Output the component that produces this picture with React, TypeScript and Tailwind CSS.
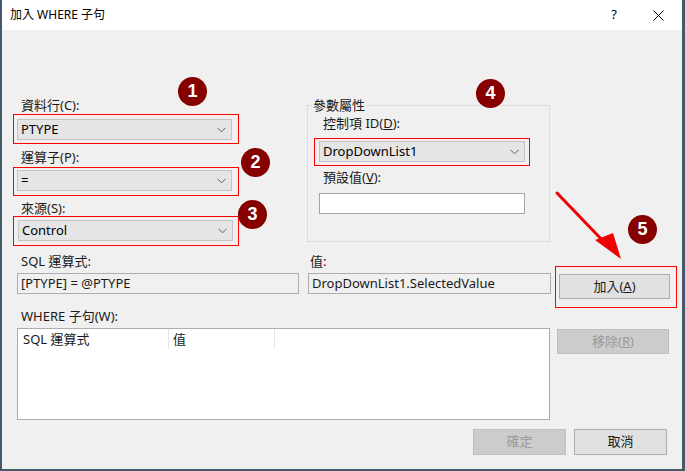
import React from "react";

const font = "font-['Segoe_UI','Noto_Sans','Noto_Sans_CJK_TC',sans-serif]";

function Chevron() {
  return (
    <svg width="9" height="6" viewBox="0 0 9 6" className="shrink-0">
      <polyline points="0.5,0.8 4.5,4.8 8.5,0.8" fill="none" stroke="#606060" strokeWidth="1" />
    </svg>
  );
}

function Combo({ value, width }: { value: string; width: string }) {
  return (
    <div
      className={`${width} h-[21px] bg-[#e5e5e5] border border-[#c4c4c4] flex items-center justify-between pl-[3px] pr-[5px] text-[13px] text-black`}
    >
      <span>{value}</span>
      <Chevron />
    </div>
  );
}

function Badge({ n, className }: { n: number; className: string }) {
  return (
    <div
      className={`absolute w-[29px] h-[29px] rounded-full bg-[#870000] text-white flex items-center justify-center text-[18px] font-bold font-['Liberation_Sans',sans-serif] ${className}`}
    >
      {n}
    </div>
  );
}

function Label({ children, className = "" }: { children: React.ReactNode; className?: string }) {
  return <div className={`h-[16px] leading-[16px] text-[13px] text-[#1a1a1a] ${className}`}>{children}</div>;
}

function Btn({
  children,
  disabled,
  className = "",
}: {
  children: React.ReactNode;
  disabled?: boolean;
  className?: string;
}) {
  return (
    <div
      className={`flex items-center justify-center text-[13px] border ${
        disabled ? "bg-[#cccccc] border-[#bfbfbf] text-[#9a9a9a]" : "bg-[#e1e1e1] border-[#adadad] text-[#1a1a1a]"
      } ${className}`}
    >
      {children}
    </div>
  );
}

export default function App() {
  return (
    <div
      className={`relative w-[685px] h-[471px] bg-[#f0f0f0] border-l-2 border-r-[3px] border-b-2 border-[#45596b] flex flex-col ${font}`}
    >
      {/* Title bar */}
      <div className="h-[30px] bg-white flex items-center pl-[8px] shrink-0">
        <span className="text-[12px] text-black">加入 WHERE 子句</span>
        <span className="ml-auto text-[13px] text-black mr-[36px]">?</span>
        <svg width="11" height="11" viewBox="0 0 11 11" className="mr-[18px]">
          <path d="M0.5 0.5 L10.5 10.5 M10.5 0.5 L0.5 10.5" stroke="#000" strokeWidth="1" />
        </svg>
      </div>

      {/* Top row */}
      <div className="flex mt-[67px]">
        <div className="ml-[11px] w-[226px] flex flex-col">
          <Label className="pl-[8px]">資料行(C):</Label>
          <div className="mt-[1px] h-[30px] border border-[#ff0000] pl-[3px] pt-[4px]">
            <Combo value="PTYPE" width="w-[215px]" />
          </div>
          <Label className="pl-[8px] mt-[5px]">運算子(P):</Label>
          <div className="mt-[2px] h-[29px] border border-[#ff0000] pl-[3px] pt-[2px]">
            <Combo value="=" width="w-[215px]" />
          </div>
          <Label className="pl-[8px] mt-[4px]">來源(S):</Label>
          <div className="h-[30px] border border-[#ff0000] pl-[4px] pt-[3px]">
            <Combo value="Control" width="w-[215px]" />
          </div>
        </div>

        <div className="relative ml-[68px] mt-[8px] w-[243px] h-[137px] border border-[#dcdcdc] flex flex-col">
          <span className="absolute -top-[9px] left-[4px] px-[1px] bg-[#f0f0f0] text-[13px] leading-[16px] text-[#1a1a1a]">
            參數屬性
          </span>
          <Label className="pl-[15px] mt-[9px]">
            控制項 ID(<span className="underline">D</span>):
          </Label>
          <div className="ml-[6px] mt-[7px] w-[216px] h-[28px] border border-[#ff0000] pl-[4px] pt-[2px]">
            <Combo value="DropDownList1" width="w-[206px]" />
          </div>
          <Label className="pl-[15px] mt-[3px]">
            預設值(<span className="underline">V</span>):
          </Label>
          <div className="ml-[11px] mt-[8px] w-[206px] h-[21px] bg-white border border-[#a5a5a5]" />
        </div>
      </div>

      {/* Expression row */}
      <div className="flex mt-[7px]">
        <div className="ml-[15px] w-[282px] flex flex-col">
          <Label className="pl-[4px]">SQL 運算式:</Label>
          <div className="mt-[4px] h-[21px] border border-[#adadad] bg-[#f0f0f0] pl-[3px] text-[13px] leading-[19px] text-[#1a1a1a]">
            [PTYPE] = @PTYPE
          </div>
        </div>
        <div className="ml-[9px] w-[243px] flex flex-col">
          <Label className="pl-[2px]">值:</Label>
          <div className="mt-[4px] h-[21px] border border-[#adadad] bg-[#f0f0f0] pl-[3px] text-[13px] leading-[19px] text-[#1a1a1a]">
            DropDownList1.SelectedValue
          </div>
        </div>
        <div className="ml-[4px] mt-[13px] w-[122px] h-[42px] border border-[#ff0000] pl-[3px] pt-[7px]">
          <Btn className="w-[111px] h-[25px]">
            加入(<span className="underline">A</span>)
          </Btn>
        </div>
      </div>

      {/* WHERE list row */}
      <div className="flex">
        <div className="ml-[15px] w-[533px] flex flex-col">
          <Label className="pl-[4px]">WHERE 子句(W):</Label>
          <div className="mt-[4px] h-[92px] bg-white border border-[#adadad]">
            <div className="flex h-[20px] text-[13px] leading-[20px] text-[#1a1a1a]">
              <div className="w-[151px] pl-[5px] border-r border-[#e5e5e5]">SQL 運算式</div>
              <div className="w-[106px] pl-[4px] border-r border-[#e5e5e5]">值</div>
            </div>
          </div>
        </div>
        <Btn disabled className="ml-[7px] mt-[21px] w-[112px] h-[25px]">
          移除(<span className="underline">R</span>)
        </Btn>
      </div>

      {/* Bottom buttons */}
      <div className="flex justify-end mt-[9px] mr-[15px] gap-[8px]">
        <Btn disabled className="w-[93px] h-[26px]">
          確定
        </Btn>
        <Btn className="w-[93px] h-[26px]">取消</Btn>
      </div>

      {/* Annotations */}
      <Badge n={1} className="left-[176px] top-[77px]" />
      <Badge n={2} className="left-[239px] top-[148px]" />
      <Badge n={3} className="left-[236px] top-[200px]" />
      <Badge n={4} className="left-[474px] top-[79px]" />
      <Badge n={5} className="left-[626px] top-[215px]" />
      <svg className="absolute left-[550px] top-[188px]" width="75" height="75" viewBox="550 188 75 75">
        <line x1="555" y1="193" x2="603" y2="243" stroke="#ee0000" strokeWidth="3" strokeLinecap="round" />
        <polygon points="593,240 611,233 619,259" fill="#ee0000" />
      </svg>
    </div>
  );
}
